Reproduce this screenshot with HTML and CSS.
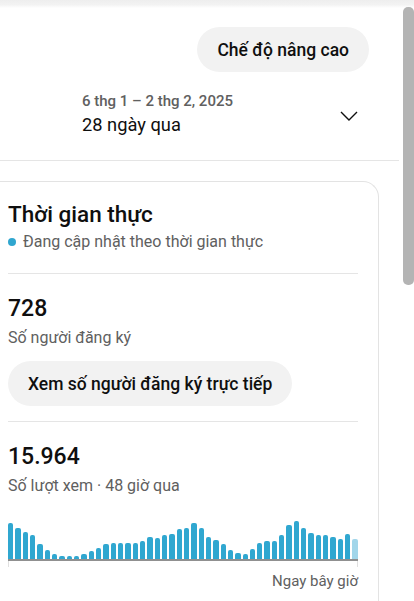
FILE: index.html
```html
<!DOCTYPE html>
<html lang="vi">
<head>
<meta charset="utf-8">
<title>Thời gian thực</title>
<link rel="stylesheet" href="styles.css">
</head>
<body>
<div class="shell">
  <div class="topshade"></div>
  <div class="frame">
    <main class="content">
      <div class="mode-row">
        <button class="pill pill-mode">Chế độ nâng cao</button>
      </div>
      <div class="date-row">
        <div class="date-text">
          <div class="date-range">6 thg 1 – 2 thg 2, 2025</div>
          <div class="date-label">28 ngày qua</div>
        </div>
        <svg class="chevron" viewBox="0 0 24 24" width="24" height="24"><path d="M4 10 L12 18 L20 10" fill="none" stroke="#0f0f0f" stroke-width="1.4"/></svg>
      </div>
      <div class="rule"></div>
      <section class="card">
        <h2 class="card-title">Thời gian thực</h2>
        <div class="live"><span class="dot"></span>Đang cập nhật theo thời gian thực</div>
        <div class="card-rule"></div>
        <div class="metric">728</div>
        <div class="metric-label">Số người đăng ký</div>
        <button class="pill pill-live">Xem số người đăng ký trực tiếp</button>
        <div class="card-rule rule-after-btn"></div>
        <div class="metric">15.964</div>
        <div class="metric-label">Số lượt xem · 48 giờ qua</div>
        <div class="chart">
          <span class="bar" style="height:36px"></span>
          <span class="bar" style="height:30.7px"></span>
          <span class="bar" style="height:27.3px"></span>
          <span class="bar" style="height:23.7px"></span>
          <span class="bar" style="height:14.7px"></span>
          <span class="bar" style="height:8.7px"></span>
          <span class="bar" style="height:4.7px"></span>
          <span class="bar" style="height:3.3px"></span>
          <span class="bar" style="height:3.3px"></span>
          <span class="bar" style="height:3.3px"></span>
          <span class="bar" style="height:4.7px"></span>
          <span class="bar" style="height:7.7px"></span>
          <span class="bar" style="height:11px"></span>
          <span class="bar" style="height:15px"></span>
          <span class="bar" style="height:16.3px"></span>
          <span class="bar" style="height:16.3px"></span>
          <span class="bar" style="height:16.3px"></span>
          <span class="bar" style="height:16.3px"></span>
          <span class="bar" style="height:17.7px"></span>
          <span class="bar" style="height:22.3px"></span>
          <span class="bar" style="height:21px"></span>
          <span class="bar" style="height:23.7px"></span>
          <span class="bar" style="height:25px"></span>
          <span class="bar" style="height:29.7px"></span>
          <span class="bar" style="height:31px"></span>
          <span class="bar" style="height:36px"></span>
          <span class="bar" style="height:31px"></span>
          <span class="bar" style="height:22.3px"></span>
          <span class="bar" style="height:18.7px"></span>
          <span class="bar" style="height:15px"></span>
          <span class="bar" style="height:8.7px"></span>
          <span class="bar" style="height:6.3px"></span>
          <span class="bar" style="height:5px"></span>
          <span class="bar" style="height:10px"></span>
          <span class="bar" style="height:16.3px"></span>
          <span class="bar" style="height:17.7px"></span>
          <span class="bar" style="height:17.7px"></span>
          <span class="bar" style="height:23.7px"></span>
          <span class="bar" style="height:33.7px"></span>
          <span class="bar" style="height:37.7px"></span>
          <span class="bar" style="height:31px"></span>
          <span class="bar" style="height:26.3px"></span>
          <span class="bar" style="height:24px"></span>
          <span class="bar" style="height:24px"></span>
          <span class="bar" style="height:22.3px"></span>
          <span class="bar" style="height:20px"></span>
          <span class="bar" style="height:25px"></span>
          <span class="bar bar-now" style="height:20px"></span>
        </div>
        <div class="ticks"></div>
        <div class="axis"><span class="axis-label">Ngay bây giờ</span></div>
      </section>
    </main>
    <div class="scrollbar"><div class="thumb"></div></div>
  </div>
</div>
</body>
</html>
```

FILE: styles.css
```css
* { box-sizing: border-box; }
html, body {
  margin: 0;
  padding: 0;
  background: #fff;
}
body {
  font-family: Roboto, "Noto Sans", "Liberation Sans", sans-serif;
  color: #0f0f0f;
  width: 414px;
  height: 601px;
  overflow: hidden;
}
.shell {
  display: flex;
  flex-direction: column;
  height: 601px;
}
.topshade {
  height: 8px;
  flex: none;
  background: linear-gradient(#eeeeee, #f3f3f3 60%, #ffffff);
}
.frame {
  display: flex;
  flex: 1;
  min-height: 0;
}
.content {
  width: 400px;
  flex: none;
  display: flex;
  flex-direction: column;
}
.scrollbar {
  width: 14px;
  flex: none;
  padding-left: 3px;
}
.thumb {
  width: 11px;
  height: 278px;
  margin-top: -1px;
  background: #b4b4b4;
  border-radius: 5px;
}
.mode-row {
  display: flex;
  justify-content: flex-end;
  padding: 19px 31px 0 0;
}
.pill {
  font-family: Roboto, "Noto Sans", "Liberation Sans", sans-serif;
  border: 0;
  background: #f2f2f2;
  color: #0f0f0f;
  height: 45px;
  border-radius: 23px;
  padding: 0 20px;
  font-weight: 500;
  font-size: 17.5px;
  display: inline-flex;
  align-items: center;
  white-space: nowrap;
}
.pill-mode {
  padding: 0 20px;
}
.date-row {
  display: flex;
  align-items: center;
  padding: 19px 39px 0 82px;
}
.date-text {
  flex: 1;
}
.date-range {
  font-size: 15px;
  line-height: 20px;
  font-weight: 500;
  color: #606060;
}
.date-label {
  font-size: 18.3px;
  line-height: 24px;
  margin-top: 2px;
}
.chevron {
  display: block;
  flex: none;
  margin-top: -1px;
}
.rule {
  height: 1px;
  background: #e5e5e5;
  margin-top: 23px;
  width: 399px;
}
.card {
  margin: 20px 21px 0 -16px;
  padding: 18px 20px 0 23px;
  border: 1px solid #e3e3e3;
  border-bottom: 0;
  border-radius: 16px 16px 0 0;
  flex: 1;
}
.card-title {
  margin: 0;
  font-size: 22.5px;
  line-height: 28px;
  font-weight: 500;
}
.live {
  display: flex;
  align-items: center;
  font-size: 16px;
  line-height: 24px;
  margin-top: 2px;
  color: #606060;
}
.dot {
  width: 8px;
  height: 8px;
  border-radius: 50%;
  background: #30a6cf;
  margin-right: 7px;
  flex: none;
}
.card-rule {
  height: 1px;
  background: #e5e5e5;
  margin-top: 19px;
}
.rule-after-btn {
  margin-top: 15px;
}
.metric {
  font-size: 23px;
  line-height: 32px;
  font-weight: 500;
  margin-top: 19px;
}
.metric-label {
  font-size: 16px;
  line-height: 24px;
  color: #606060;
  margin-top: 1px;
}
.metric-label + .chart {
  margin-top: 18px;
}
.pill-live {
  margin-top: 11px;
  align-self: flex-start;
}
.chart {
  height: 45px;
  display: flex;
  align-items: flex-end;
  gap: 2px;
  border-bottom: 2px solid #909090;
}
.bar {
  flex: 1;
  background: #30a7d0;
  border-radius: 2px 2px 0 0;
}
.bar-now {
  background: #a2d6ea;
}
.ticks {
  height: 6px;
  border-left: 1px solid #e0e0e0;
  border-right: 1px solid #e0e0e0;
}
.axis {
  display: flex;
  justify-content: flex-end;
  margin-top: 4px;
  white-space: nowrap;
}
.axis-label {
  font-size: 15px;
  line-height: 20px;
  color: #606060;
}
```
